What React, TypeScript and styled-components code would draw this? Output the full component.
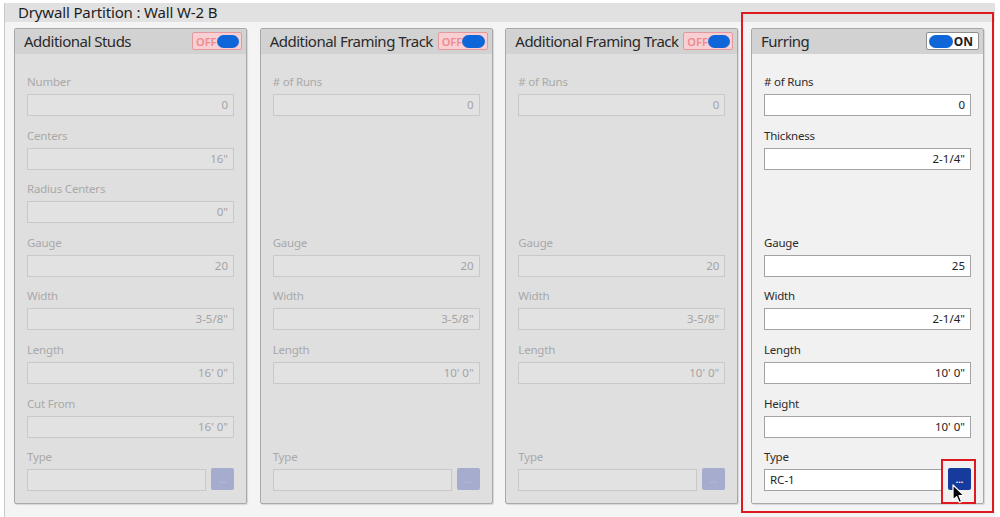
import React from "react";
import styled, { createGlobalStyle } from "styled-components";

const Global = createGlobalStyle`
  html, body { margin: 0; padding: 0; background: #ffffff; }
  body { font-family: "Noto Sans", "Open Sans", sans-serif; }
  * { box-sizing: border-box; }
`;

const Page = styled.div`
  width: 1000px;
  height: 517px;
  padding: 3px 5px 0 4px;
  background: #ffffff;
  overflow: hidden;
`;

const Frame = styled.div`
  height: 514px;
  border-left: 1px solid #c9c9c9;
  background: #f4f4f4;
  display: flex;
  flex-direction: column;
`;

const TitleBar = styled.div`
  height: 19px;
  background: #e1e1e1;
  padding-left: 13px;
  font-size: 15px;
  line-height: 19px;
  color: #1e1e1e;
  letter-spacing: -0.15px;
`;

const PanelRow = styled.div`
  display: flex;
  gap: 12.67px;
  padding: 6px 0 0 9px;
`;

const Panel = styled.div<{ $active?: boolean }>`
  position: relative;
  width: 233px;
  height: 476px;
  border: 1px solid #a9a9a9;
  border-radius: 2px;
  background: ${(p) => (p.$active ? "#f1f1f1" : "#dfdfdf")};
  box-shadow: 1px 1px 1px rgba(0, 0, 0, 0.12);
  display: flex;
  flex-direction: column;
`;

const PanelHeader = styled.div`
  height: 25px;
  background: #d2d2d2;
  display: flex;
  align-items: center;
  padding: 0 4px 1px 9px;
`;

const PanelTitle = styled.div`
  flex: 1;
  min-width: 0;
  white-space: nowrap;
  font-size: 15px;
  color: #2a2a2a;
  letter-spacing: -0.5px;
`;

const Body = styled.div`
  flex: 1;
  display: grid;
  grid-template-rows: repeat(8, 43px);
  row-gap: 10.6px;
  padding: 19px 12px 0 12px;
`;

const Field = styled.div`
  display: flex;
  flex-direction: column;
  gap: 4px;
`;

const Label = styled.div<{ $active?: boolean }>`
  height: 17px;
  font-size: 11.5px;
  line-height: 17px;
  color: ${(p) => (p.$active ? "#2c2c2c" : "#a9a9a9")};
  letter-spacing: -0.2px;
`;

const InputLine = styled.div`
  display: flex;
  gap: 5px;
`;

const Input = styled.div<{ $active?: boolean; $left?: boolean }>`
  flex: 1;
  height: 22px;
  border: 1px solid ${(p) => (p.$active ? "#a3a3a3" : "#c9c9c9")};
  background: ${(p) => (p.$active ? "#ffffff" : "#e2e2e2")};
  font-size: 11.5px;
  line-height: 20px;
  padding: 0 5px;
  text-align: ${(p) => (p.$left ? "left" : "right")};
  color: ${(p) => (p.$active ? "#222" : "#a4a4a4")};
`;

const DotButton = styled.div<{ $active?: boolean }>`
  position: relative;
  width: 23px;
  height: 22px;
  margin-top: -1px;
  border-radius: 2px;
  background: ${(p) => (p.$active ? "#173b9c" : "#a5accd")};
  color: ${(p) => (p.$active ? "#ffffff" : "#b8bed8")};
  font-size: 9px;
  font-weight: 700;
  display: flex;
  align-items: center;
  justify-content: center;
  line-height: 1;
`;

const Toggle = styled.div<{ $on?: boolean }>`
  position: relative;
  z-index: 1;
  width: ${(p) => (p.$on ? "53px" : "50px")};
  height: 18px;
  border: 1px solid ${(p) => (p.$on ? "#8e8e8e" : "#e39a9f")};
  border-radius: 2px;
  background: ${(p) => (p.$on ? "#ffffff" : "#f8cfd2")};
  display: flex;
  flex-direction: ${(p) => (p.$on ? "row" : "row-reverse")};
  align-items: center;
  justify-content: space-between;
  padding: 0 2px;
  flex-shrink: 0;
`;

const Pill = styled.div`
  width: 24px;
  height: 13px;
  border-radius: 7px;
  background: #0f66d8;
`;

const ToggleText = styled.span<{ $on?: boolean }>`
  font-size: ${(p) => (p.$on ? "12px" : "11px")};
  font-weight: ${(p) => (p.$on ? 700 : 600)};
  color: ${(p) => (p.$on ? "#1c1c1c" : "#ef8a90")};
  padding: ${(p) => (p.$on ? "0 3px 0 0" : "0 0 0 1px")};
`;

const Highlight = styled.div`
  position: absolute;
  left: -11px;
  top: -17px;
  right: -11px;
  bottom: -10px;
  border: 2px solid #dc1a1f;
  pointer-events: none;
`;

const ButtonHighlight = styled.div`
  position: absolute;
  left: -7px;
  top: -9px;
  right: -5px;
  bottom: -14px;
  border: 2px solid #dc1a1f;
  pointer-events: none;
`;

const Cursor = styled.svg`
  position: absolute;
  left: 4px;
  top: 16px;
`;

type Row = { label: string; value: string } | null;

const studs: Row[] = [
  { label: "Number", value: "0" },
  { label: "Centers", value: '16"' },
  { label: "Radius Centers", value: '0"' },
  { label: "Gauge", value: "20" },
  { label: "Width", value: '3-5/8"' },
  { label: "Length", value: "16' 0\"" },
  { label: "Cut From", value: "16' 0\"" },
];

const track: Row[] = [
  { label: "# of Runs", value: "0" },
  null,
  null,
  { label: "Gauge", value: "20" },
  { label: "Width", value: '3-5/8"' },
  { label: "Length", value: "10' 0\"" },
  null,
];

const furring: Row[] = [
  { label: "# of Runs", value: "0" },
  { label: "Thickness", value: '2-1/4"' },
  null,
  { label: "Gauge", value: "25" },
  { label: "Width", value: '2-1/4"' },
  { label: "Length", value: "10' 0\"" },
  { label: "Height", value: "10' 0\"" },
];

function PanelView({
  title,
  rows,
  active,
  typeValue,
}: {
  title: string;
  rows: Row[];
  active?: boolean;
  typeValue?: string;
}) {
  return (
    <Panel $active={active}>
      {active && <Highlight />}
      <PanelHeader>
        <PanelTitle>{title}</PanelTitle>
        <Toggle $on={active}>
          <Pill />
          <ToggleText $on={active}>{active ? "ON" : "OFF"}</ToggleText>
        </Toggle>
      </PanelHeader>
      <Body>
        {rows.map((r, i) =>
          r ? (
            <Field key={i}>
              <Label $active={active}>{r.label}</Label>
              <InputLine>
                <Input $active={active}>{r.value}</Input>
              </InputLine>
            </Field>
          ) : (
            <div key={i} />
          )
        )}
        <Field>
          <Label $active={active}>Type</Label>
          <InputLine>
            <Input $active={active} $left>
              {typeValue ?? ""}
            </Input>
            <DotButton $active={active}>
              ...
              {active && <ButtonHighlight />}
              {active && (
                <Cursor width="14" height="20" viewBox="0 0 14 20">
                  <path
                    d="M1 1 L1 16 L4.6 12.6 L7.2 18.6 L9.6 17.6 L7 11.6 L12 11.6 Z"
                    fill="#000"
                    stroke="#fff"
                    strokeWidth="1.2"
                    strokeLinejoin="round"
                  />
                </Cursor>
              )}
            </DotButton>
          </InputLine>
        </Field>
      </Body>
    </Panel>
  );
}

export default function App() {
  return (
    <>
      <Global />
      <Page>
        <Frame>
          <TitleBar>Drywall Partition : Wall W-2 B</TitleBar>
          <PanelRow>
            <PanelView title="Additional Studs" rows={studs} />
            <PanelView title="Additional Framing Track" rows={track} />
            <PanelView title="Additional Framing Track" rows={track} />
            <PanelView title="Furring" rows={furring} active typeValue="RC-1" />
          </PanelRow>
        </Frame>
      </Page>
    </>
  );
}
